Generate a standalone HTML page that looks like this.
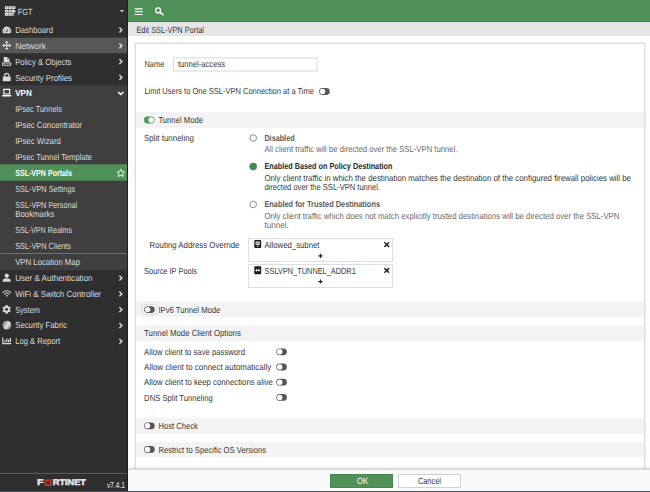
<!DOCTYPE html>
<html lang="en">
<head>
<meta charset="utf-8">
<title>Edit SSL-VPN Portal</title>
<style>
html,body{margin:0;padding:0}
body{width:650px;height:492px;position:relative;overflow:hidden;background:#fefefe;font-family:"Liberation Sans",sans-serif;color:#333}
.a{position:absolute}
.t{position:absolute;white-space:nowrap;line-height:1;transform-origin:0 50%;display:block}
#sb{left:0;top:0;width:127px;height:492px;background:#2f2f2f;border-right:1px solid #202020}
.hov{left:0;width:127px;background:#575757}
.exp{left:0;width:127px;background:#3f3f3f}
.act{left:0;width:127px;background:#4f9159}
.sep{left:0;width:127px;height:1px;background:#747474}
#hd{left:128px;top:0;width:522px;height:21px;background:#50915a;border-bottom:1px solid #427c4b}
#tb{left:128px;top:22px;width:522px;height:14px;background:#e5e5e5}
#pn{left:135px;top:43px;width:508px;height:440px;background:#fff;border:1px solid #dedede;box-shadow:0 0 1.5px rgba(0,0,0,.22)}
.bar{left:136px;width:508px;background:#f3f3f3}
#ft{left:128px;top:469px;width:522px;height:22px;background:#fafafa;border-top:1px solid #d8d8d8;box-shadow:0 -1px 2px rgba(0,0,0,.18)}
#bl{left:0;top:491px;width:650px;height:1px;background:#4a555c}
.inp{background:#fff;border:1px solid #d9d9d9;box-sizing:border-box}
.box{background:#fff;border:1px solid #dedede;box-sizing:border-box;left:248px;width:145px}
.tg{width:10.8px;height:7px;border-radius:3.5px;background:#565656}
.tg i{position:absolute;left:.7px;top:.7px;width:5.6px;height:5.6px;border-radius:50%;background:#fff}
.tg.on{background:#4a9a58}
.tg.on i{left:auto;right:.7px}
.rd{width:7.4px;height:7.4px;border-radius:50%;box-sizing:border-box;border:1px solid #6a6a6a;background:#fff;left:249.5px}
.rd.on{background:#3f8f52;border-color:#3f8f52}
.btn{top:474px;height:13.5px;box-sizing:border-box}
svg{position:absolute;overflow:visible}
</style>
</head>
<body>
<!-- sidebar -->
<div id="sb" class="a"></div>
<svg class="a" style="left:0;top:0" width="127" height="492" viewBox="0 0 127 492">
<rect x="0" y="37.7" width="127" height="15.5" fill="#575757"/>
<rect x="0" y="85.3" width="127" height="184.9" fill="#3f3f3f"/>
<rect x="0" y="164.3" width="127" height="16.4" fill="#4f9159"/>
<rect x="0" y="253" width="127" height="1" fill="#727272"/>
<rect x="0" y="472.9" width="127" height="1" fill="#606060"/>
</svg>
<svg class="a" style="left:0;top:0" width="128" height="492" viewBox="0 0 128 492" fill="#d9d9d9" stroke="none">
<!-- FGT device icon -->
<g fill="#ebebeb">
<rect x="4.900" y="6.300" width="10.500" height="2.700" rx=".4"/>
<path d="M5.300 9.700h8.900l1.200 1.300v1.500H5.300q-.4 0-.4-.4v-2q0-.4.400-.4z"/>
<path d="M5.300 13.100h8.700l-.9 2.700H5.300q-.4 0-.4-.4v-1.900q0-.4.400-.4z"/>
</g>
<g fill="#2f2f2f"><rect x="8.200" y="6.300" width=".45" height="2.700"/><rect x="11.700" y="6.300" width=".45" height="2.700"/><rect x="8.200" y="9.700" width=".45" height="2.800"/><rect x="11.700" y="9.700" width=".45" height="2.800"/><rect x="8.200" y="13.100" width=".45" height="2.700"/><rect x="11.700" y="13.100" width=".45" height="2.700"/>
<rect x="6.200" y="7.300" width=".9" height=".8"/><rect x="9.700" y="7.300" width=".9" height=".8"/><rect x="13.200" y="7.300" width=".9" height=".8"/><rect x="6.200" y="10.700" width=".9" height=".8"/><rect x="9.700" y="10.700" width=".9" height=".8"/><rect x="6.200" y="14.100" width=".9" height=".8"/><rect x="9.700" y="14.100" width=".9" height=".8"/></g>
<circle cx="14.900" cy="15.300" r=".45" fill="#bbb"/>
<!-- caret -->
<path d="M119.9 10.1h4l-2 2.5z" fill="#cfcfcf"/>
<!-- dashboard -->
<path d="M2.5 31.1a4.35 4.5 0 0 1 8.7 0c0 .8-.25 1.5-.65 2.100h-7.400c-.4-.6-.65-1.300-.65-2.100z"/>
<g stroke="#2f2f2f" stroke-width=".75" fill="none"><path d="M6.500 31.900l1.700-3.300"/><path d="M3.900 30.800h.9M8.900 30.800h.9M4.900 28.700l.5.500"/><circle cx="6.600" cy="31.600" r=".7" fill="#2f2f2f" stroke="none"/></g>
<!-- network arrows -->
<g transform="translate(6.750 45.400)" fill="#dcdcdc"><path d="M0-4.700l1.900 2.100H.55v2.050h2.050v-1.350l2.100 1.900-2.100 1.900V.55H.55v2.050h1.350L0 4.700l-1.900-2.100h1.350V.55h-2.050v1.350L-4.700 0l2.100-1.900v1.350h2.050v-2.050h-1.350z"/></g>
<!-- policy -->
<path d="M3.700 57h3.900l1.900 1.900v3.300H3.700z"/><path d="M7.600 57v1.900h1.900" fill="none" stroke="#2f2f2f" stroke-width=".5"/>
<path d="M2.400 62.500l.9-.6v.9h6.700v-.9l.9.600q.3.200.3.600v1.800q0 .8-.8.800H2.900q-.8 0-.8-.8v-1.800q0-.4.300-.6z M3.100 63.600v1.200h7.200v-1.200z" fill-rule="evenodd"/>
<!-- lock -->
<rect x="2.800" y="76.600" width="7.900" height="4.700" rx=".7"/><path d="M4.650 76.800v-1.300a2.100 2.100 0 0 1 4.200 0v1.300" fill="none" stroke="#d9d9d9" stroke-width="1.200"/>
<!-- laptop -->
<g fill="#fff"><path d="M3.300 88.800h6.900v5.800H3.300z M4.400 89.900v3.600h4.700v-3.600z" fill-rule="evenodd"/><path d="M2.200 95h9v.8q0 .7-.8.700H3q-.8 0-.8-.7z"/></g>
<!-- star -->
<path d="M120.800 169.200l1.150 2.500 2.700.3-2 1.850.55 2.700-2.400-1.350-2.400 1.350.55-2.700-2-1.850 2.700-.3z" fill="none" stroke="#fff" stroke-width=".9" stroke-linejoin="round"/>
<!-- user -->
<circle cx="6.750" cy="275.750" r="2.150"/><path d="M2.800 281.700v-1.100c0-1.300 1.100-2.100 2.200-2.100h3.500c1.100 0 2.200.8 2.200 2.100v1.100z"/>
<!-- wifi -->
<g fill="none" stroke="#d9d9d9" stroke-width="1.050" stroke-linecap="round"><path d="M3 292.400a5.500 5.500 0 0 1 7.700 0"/><path d="M4.700 294.100a3.100 3.100 0 0 1 4.300 0"/></g><circle cx="6.850" cy="295.700" r=".85"/>
<!-- gear -->
<g transform="translate(6.600 309.400)"><circle r="3.100"/><g><rect x="-1.100" y="-4.300" width="2.200" height="8.600" rx=".3"/><rect x="-1.100" y="-4.300" width="2.200" height="8.600" rx=".3" transform="rotate(60)"/><rect x="-1.100" y="-4.300" width="2.200" height="8.600" rx=".3" transform="rotate(120)"/></g><circle r="1.400" fill="#2f2f2f"/></g>
<!-- fabric -->
<circle cx="6.850" cy="325.100" r="4.300" fill="#a4a4a4"/><path d="M3.900 328l4.100-6.900c1.300.3 2.400 1.200 2.900 2.500l-4.800 5.800c-.9-.1-1.700-.6-2.200-1.400z" fill="#e6e6e6" opacity=".8"/>
<!-- chart -->
<path d="M2.200 337.600h1.200v5.400h7.800v1.200H2.200z"/><path d="M4.400 340.300h1.200v2H4.400zM6.200 338.600h1.200v3.700H6.200zM8 339.500h1.200v2.800H8zM9.800 338h1.200v4.300H9.800z"/>
<!-- chevrons -->
<g fill="none" stroke="#e0e0e0" stroke-width="1.400">
<path d="M119.400 27.60l2.500 2.400-2.500 2.400"/>
<path d="M119.400 43.40l2.500 2.400-2.500 2.400"/>
<path d="M119.400 59.20l2.500 2.400-2.500 2.400"/>
<path d="M119.400 75.00l2.500 2.400-2.500 2.400"/>
<path d="M118.100 91.900l2.700 2.600 2.700-2.600" stroke="#fff" stroke-width="1.450"/>
<path d="M119.400 275.70l2.500 2.400-2.500 2.400"/>
<path d="M119.400 291.50l2.500 2.400-2.500 2.400"/>
<path d="M119.400 307.30l2.500 2.400-2.500 2.400"/>
<path d="M119.400 323.10l2.500 2.400-2.500 2.400"/>
<path d="M119.400 338.90l2.500 2.400-2.500 2.400"/>
</g>
<!-- fortinet logo -->
<g font-family="Liberation Sans, sans-serif" font-weight="700" font-size="8.300" fill="#ececec" text-rendering="geometricPrecision" stroke="#ececec" stroke-width=".4">
<text x="37" y="485.400" textLength="6.500" lengthAdjust="spacingAndGlyphs">F</text>
<text x="52.800" y="485.400" textLength="33.200" lengthAdjust="spacingAndGlyphs">RTINET</text>
</g>
<g fill="#e03a2e"><rect x="44.600" y="479.400" width="2" height="1.800"/><rect x="47.100" y="479.400" width="2" height="1.800"/><rect x="49.600" y="479.400" width="2" height="1.800"/><rect x="44.600" y="481.800" width="2" height="1.800"/><rect x="49.600" y="481.800" width="2" height="1.800"/><rect x="44.600" y="484.200" width="2" height="1.800"/><rect x="47.100" y="484.200" width="2" height="1.800"/><rect x="49.600" y="484.200" width="2" height="1.800"/></g>
</svg>

<!-- main -->
<div id="hd" class="a"></div>
<div id="tb" class="a"></div>
<div id="pn" class="a"></div>
<div class="a bar" style="top:112px;height:15.6px"></div>
<div class="a bar" style="top:301.4px;height:15.6px"></div>
<div class="a bar" style="top:325.4px;height:15.5px"></div>
<div class="a bar" style="top:417.8px;height:15.8px"></div>
<div class="a bar" style="top:442px;height:15.4px"></div>
<div class="a box" style="top:238.2px;height:23.6px"></div>
<div class="a box" style="top:264.2px;height:23.7px"></div>
<div id="ft" class="a"></div>
<div class="a btn" style="left:329.6px;width:63.6px;background:#4f9159;border:1px solid #468550"></div>
<div class="a btn" style="left:397.7px;width:63.4px;background:#fff;border:1px solid #d0d0d0"></div>
<div id="bl" class="a"></div>
<svg class="a" style="left:128px;top:0" width="522" height="492" viewBox="128 0 522 492">
<!-- hamburger -->
<g fill="#fff"><rect x="134.800" y="8.300" width="7.900" height="1.150" rx=".3"/><rect x="134.800" y="11.100" width="7.900" height="1.150" rx=".3"/><rect x="134.800" y="13.900" width="7.900" height="1.150" rx=".3"/></g>
<!-- search -->
<g fill="none" stroke="#fff" stroke-width="1.250"><circle cx="158.100" cy="10.400" r="2.450"/><path d="M160.100 12.300l2.900 2.400" stroke-linecap="round" stroke-width="1.500"/></g>
<!-- input -->
<rect x="173.500" y="57.950" width="143.600" height="13.100" fill="#fff" stroke="#d8d8d8" stroke-width="1"/>
<!-- entry icons -->
<rect x="254.300" y="240" width="6.900" height="8" rx=".9" fill="#1c1c1c"/>
<rect x="255.500" y="241.400" width="4.500" height="3.300" rx=".6" fill="#fff"/><rect x="255.500" y="242.700" width="4.500" height=".7" fill="#1c1c1c"/><rect x="256.600" y="245.700" width="2.300" height=".8" fill="#ddd"/>
<rect x="254.300" y="266.200" width="6.900" height="8" rx=".9" fill="#1c1c1c"/>
<path d="M255.300 270.200l1.500-1.700v1.200h1.900v-1.200l1.500 1.700-1.500 1.700v-1.200h-1.900v1.200z" fill="#fff"/>
<g stroke="#b44a7a" stroke-width=".45" opacity=".7"><path d="M253.600 241.700h.9M253.600 244h.9M253.600 246.300h.9M253.600 267.900h.9M253.600 270.200h.9M253.600 272.500h.9"/></g>
<!-- radios -->
<circle cx="253.200" cy="138" r="3.300" fill="#fff" stroke="#777" stroke-width=".85"/>
<circle cx="253.200" cy="166.400" r="3.750" fill="#3f8f52"/>
<circle cx="253.200" cy="204.400" r="3.300" fill="#fff" stroke="#777" stroke-width=".85"/>
<!-- x marks -->
<g stroke="#2b2b2b" stroke-width="1.500" fill="none"><path d="M384.400 242.200l4.700 4.700M389.100 242.200l-4.700 4.700"/><path d="M384.400 268.100l4.700 4.700M389.100 268.100l-4.700 4.700"/></g>
<!-- plus -->
<g stroke="#222" stroke-width="1.250" fill="none"><path d="M318.400 255.800h4.200M320.500 253.700v4.200"/><path d="M318.400 281.500h4.200M320.500 279.400v4.200"/></g>
<!-- toggles -->
<rect x="142.2" y="304.4" width="14.200" height="10" rx="1.200" fill="#f8f8f8" stroke="#d2d2d2" stroke-width=".7"/>
<rect x="319.10" y="88.10" width="10.6" height="6.8" rx="3.40" fill="#575757"/><circle cx="322.50" cy="91.50" r="2.70" fill="#fff"/>
<rect x="144.00" y="116.60" width="10.6" height="6.8" rx="3.40" fill="#4b9a59"/><circle cx="151.20" cy="120.00" r="2.70" fill="#fff"/>
<rect x="144.20" y="306.20" width="10.6" height="6.8" rx="3.40" fill="#575757"/><circle cx="147.60" cy="309.60" r="2.70" fill="#fff"/>
<rect x="276.30" y="348.40" width="10.6" height="6.8" rx="3.40" fill="#575757"/><circle cx="279.70" cy="351.80" r="2.70" fill="#fff"/>
<rect x="276.30" y="363.60" width="10.6" height="6.8" rx="3.40" fill="#575757"/><circle cx="279.70" cy="367.00" r="2.70" fill="#fff"/>
<rect x="276.30" y="378.80" width="10.6" height="6.8" rx="3.40" fill="#575757"/><circle cx="279.70" cy="382.20" r="2.70" fill="#fff"/>
<rect x="276.30" y="394.00" width="10.6" height="6.8" rx="3.40" fill="#575757"/><circle cx="279.70" cy="397.40" r="2.70" fill="#fff"/>
<rect x="144.10" y="422.40" width="10.6" height="6.8" rx="3.40" fill="#575757"/><circle cx="147.50" cy="425.80" r="2.70" fill="#fff"/>
<rect x="144.10" y="446.00" width="10.6" height="6.8" rx="3.40" fill="#575757"/><circle cx="147.50" cy="449.40" r="2.70" fill="#fff"/>
</svg>

<svg class="a" id="tx" style="left:0;top:0" width="650" height="492" viewBox="0 0 650 492" font-family="Liberation Sans, sans-serif" font-size="8.8" fill="#383838" text-rendering="geometricPrecision">
<text x="17.8" y="14.5" textLength="14.7" lengthAdjust="spacingAndGlyphs" font-size="9.0" fill="#dcdcdc">FGT</text>
<text x="15.2" y="32.8" textLength="37.8" lengthAdjust="spacingAndGlyphs" fill="#dcdcdc">Dashboard</text>
<text x="15.2" y="48.7" textLength="30.8" lengthAdjust="spacingAndGlyphs" fill="#dcdcdc">Network</text>
<text x="15.2" y="64.5" textLength="56.3" lengthAdjust="spacingAndGlyphs" fill="#dcdcdc">Policy &amp; Objects</text>
<text x="15.2" y="80.6" textLength="56.8" lengthAdjust="spacingAndGlyphs" fill="#dcdcdc">Security Profiles</text>
<text x="15.2" y="96.3" textLength="16.6" lengthAdjust="spacingAndGlyphs" font-weight="700" fill="#fff">VPN</text>
<text x="15.2" y="112.2" textLength="46.7" lengthAdjust="spacingAndGlyphs" fill="#dcdcdc">IPsec Tunnels</text>
<text x="15.2" y="128.0" textLength="66.7" lengthAdjust="spacingAndGlyphs" fill="#dcdcdc">IPsec Concentrator</text>
<text x="15.2" y="143.9" textLength="45.6" lengthAdjust="spacingAndGlyphs" fill="#dcdcdc">IPsec Wizard</text>
<text x="15.2" y="159.8" textLength="76.8" lengthAdjust="spacingAndGlyphs" fill="#dcdcdc">IPsec Tunnel Template</text>
<text x="15.2" y="175.8" textLength="56.8" lengthAdjust="spacingAndGlyphs" font-weight="700" fill="#fff">SSL-VPN Portals</text>
<text x="15.2" y="191.8" textLength="60.0" lengthAdjust="spacingAndGlyphs" fill="#dcdcdc">SSL-VPN Settings</text>
<text x="15.2" y="207.7" textLength="62.0" lengthAdjust="spacingAndGlyphs" fill="#dcdcdc">SSL-VPN Personal</text>
<text x="15.2" y="217.0" textLength="39.2" lengthAdjust="spacingAndGlyphs" fill="#dcdcdc">Bookmarks</text>
<text x="15.2" y="232.8" textLength="56.8" lengthAdjust="spacingAndGlyphs" fill="#dcdcdc">SSL-VPN Realms</text>
<text x="15.2" y="248.7" textLength="55.8" lengthAdjust="spacingAndGlyphs" fill="#dcdcdc">SSL-VPN Clients</text>
<text x="15.2" y="265.3" textLength="64.8" lengthAdjust="spacingAndGlyphs" fill="#dcdcdc">VPN Location Map</text>
<text x="15.2" y="281.1" textLength="77.4" lengthAdjust="spacingAndGlyphs" fill="#dcdcdc">User &amp; Authentication</text>
<text x="15.2" y="296.9" textLength="85.8" lengthAdjust="spacingAndGlyphs" fill="#dcdcdc">WiFi &amp; Switch Controller</text>
<text x="15.2" y="312.6" textLength="24.8" lengthAdjust="spacingAndGlyphs" fill="#dcdcdc">System</text>
<text x="15.2" y="328.3" textLength="52.0" lengthAdjust="spacingAndGlyphs" fill="#dcdcdc">Security Fabric</text>
<text x="15.2" y="344.0" textLength="45.0" lengthAdjust="spacingAndGlyphs" fill="#dcdcdc">Log &amp; Report</text>
<text x="107.0" y="488.2" textLength="18.0" lengthAdjust="spacingAndGlyphs" font-size="8.6" fill="#e6e6e6">v7.4.1</text>
<text x="136.4" y="32.5" textLength="67.6" lengthAdjust="spacingAndGlyphs" font-size="9.0">Edit SSL-VPN Portal</text>
<text x="144.4" y="67.0" textLength="20.0" lengthAdjust="spacingAndGlyphs">Name</text>
<text x="178.0" y="67.0" textLength="47.0" lengthAdjust="spacingAndGlyphs">tunnel-access</text>
<text x="144.4" y="94.4" textLength="169.6" lengthAdjust="spacingAndGlyphs">Limit Users to One SSL-VPN Connection at a Time</text>
<text x="158.4" y="123.4" textLength="44.6" lengthAdjust="spacingAndGlyphs">Tunnel Mode</text>
<text x="144.0" y="141.4" textLength="50.0" lengthAdjust="spacingAndGlyphs">Split tunneling</text>
<text x="264.4" y="140.7" textLength="30.2" lengthAdjust="spacingAndGlyphs" font-weight="700" fill="#5a5a5a">Disabled</text>
<text x="264.4" y="152.0" textLength="193.1" lengthAdjust="spacingAndGlyphs" fill="#6b6b6b">All client traffic will be directed over the SSL-VPN tunnel.</text>
<text x="264.4" y="169.4" textLength="128.1" lengthAdjust="spacingAndGlyphs" font-weight="700" fill="#2b2b2b">Enabled Based on Policy Destination</text>
<text x="264.4" y="180.7" textLength="366.6" lengthAdjust="spacingAndGlyphs">Only client traffic in which the destination matches the destination of the configured firewall policies will be</text>
<text x="264.4" y="190.2" textLength="115.6" lengthAdjust="spacingAndGlyphs">directed over the SSL-VPN tunnel.</text>
<text x="264.4" y="207.4" textLength="115.6" lengthAdjust="spacingAndGlyphs" font-weight="700" fill="#5a5a5a">Enabled for Trusted Destinations</text>
<text x="264.4" y="218.7" textLength="355.0" lengthAdjust="spacingAndGlyphs" fill="#6b6b6b">Only client traffic which does not match explicitly trusted destinations will be directed over the SSL-VPN</text>
<text x="264.4" y="228.2" textLength="24.3" lengthAdjust="spacingAndGlyphs" fill="#6b6b6b">tunnel.</text>
<text x="149.6" y="248.0" textLength="89.8" lengthAdjust="spacingAndGlyphs">Routing Address Override</text>
<text x="264.6" y="247.7" textLength="54.9" lengthAdjust="spacingAndGlyphs">Allowed_subnet</text>
<text x="144.0" y="273.6" textLength="53.0" lengthAdjust="spacingAndGlyphs">Source IP Pools</text>
<text x="264.6" y="273.5" textLength="91.2" lengthAdjust="spacingAndGlyphs">SSLVPN_TUNNEL_ADDR1</text>
<text x="158.4" y="312.7" textLength="62.0" lengthAdjust="spacingAndGlyphs">IPv6 Tunnel Mode</text>
<text x="144.1" y="336.2" textLength="96.8" lengthAdjust="spacingAndGlyphs">Tunnel Mode Client Options</text>
<text x="144.1" y="354.9" textLength="100.9" lengthAdjust="spacingAndGlyphs">Allow client to save password</text>
<text x="144.1" y="370.1" textLength="127.1" lengthAdjust="spacingAndGlyphs">Allow client to connect automatically</text>
<text x="144.1" y="385.3" textLength="128.8" lengthAdjust="spacingAndGlyphs">Allow client to keep connections alive</text>
<text x="144.1" y="400.6" textLength="68.7" lengthAdjust="spacingAndGlyphs">DNS Split Tunneling</text>
<text x="158.4" y="429.3" textLength="39.4" lengthAdjust="spacingAndGlyphs">Host Check</text>
<text x="158.4" y="452.8" textLength="107.6" lengthAdjust="spacingAndGlyphs">Restrict to Specific OS Versions</text>
<text x="357.0" y="483.7" textLength="11.0" lengthAdjust="spacingAndGlyphs" font-size="9.0" fill="#fff">OK</text>
<text x="417.9" y="483.7" textLength="23.0" lengthAdjust="spacingAndGlyphs" font-size="9.0">Cancel</text>
</svg>
</body>
</html>
